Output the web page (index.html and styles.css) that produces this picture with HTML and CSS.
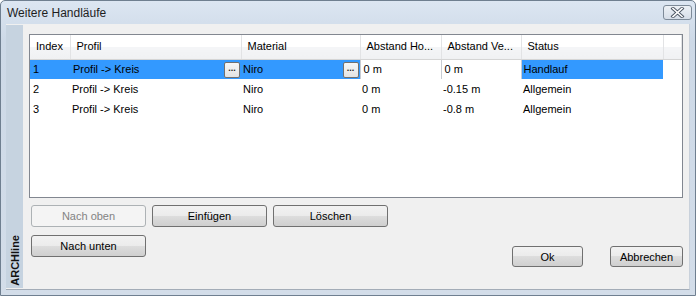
FILE: index.html
```html
<!DOCTYPE html>
<html lang="de">
<head>
    <meta charset="UTF-8">
    <title>Weitere Handläufe</title>
    <link rel="stylesheet" href="styles.css">
</head>
<body>
    <div class="window">
        <div class="titlebar">
            <span class="title">Weitere Handläufe</span>
            <button class="close" title="Schließen">
                <svg width="15" height="11" viewBox="0 0 15 11">
                    <path d="M3 1.5 L12 9.5 M12 1.5 L3 9.5" stroke="#4b5563" stroke-width="3.4" stroke-linecap="square"/>
                    <path d="M3 1.5 L12 9.5 M12 1.5 L3 9.5" stroke="#fff" stroke-width="1.6" stroke-linecap="square"/>
                </svg>
            </button>
        </div>
        <div class="client">
            <div class="brand"><span>ARCHline</span></div>
            <div class="content">
                <div class="grid">
                    <table>
                        <colgroup>
                            <col class="c-index">
                            <col class="c-profil">
                            <col class="c-material">
                            <col class="c-ho">
                            <col class="c-ve">
                            <col class="c-status">
                            <col>
                        </colgroup>
                        <thead>
                            <tr>
                                <th>Index</th>
                                <th>Profil</th>
                                <th>Material</th>
                                <th>Abstand Ho...</th>
                                <th>Abstand Ve...</th>
                                <th>Status</th>
                                <th></th>
                            </tr>
                        </thead>
                        <tbody>
                            <tr class="selected">
                                <td>1</td>
                                <td class="pick"><span class="val">Profil -&gt; Kreis</span><button class="dots">...</button></td>
                                <td class="pick"><span class="val">Niro</span><button class="dots">...</button></td>
                                <td class="edit">0 m</td>
                                <td class="edit">0 m</td>
                                <td>Handlauf</td>
                                <td class="filler"></td>
                            </tr>
                            <tr>
                                <td>2</td>
                                <td>Profil -&gt; Kreis</td>
                                <td>Niro</td>
                                <td>0 m</td>
                                <td>-0.15 m</td>
                                <td>Allgemein</td>
                                <td></td>
                            </tr>
                            <tr>
                                <td>3</td>
                                <td>Profil -&gt; Kreis</td>
                                <td>Niro</td>
                                <td>0 m</td>
                                <td>-0.8 m</td>
                                <td>Allgemein</td>
                                <td></td>
                            </tr>
                        </tbody>
                    </table>
                </div>
                <div class="bottom">
                    <div class="tools">
                        <div class="tool-row">
                            <button class="btn wide" disabled>Nach oben</button>
                            <button class="btn wide">Einfügen</button>
                            <button class="btn wide">Löschen</button>
                        </div>
                        <div class="tool-row">
                            <button class="btn wide">Nach unten</button>
                        </div>
                    </div>
                    <div class="dialog-buttons">
                        <button class="btn ok">Ok</button>
                        <button class="btn cancel">Abbrechen</button>
                    </div>
                </div>
            </div>
        </div>
    </div>
</body>
</html>
```

FILE: styles.css
```css
* {
    box-sizing: border-box;
}
body {
    margin: 0;
    font-family: "Liberation Sans", Arial, sans-serif;
    font-size: 11px;
    color: #000;
    background: #fff;
}
.window {
    width: 696px;
    height: 296px;
    border: 1px solid #6f7f90;
    border-radius: 5px 5px 0 0;
    background: linear-gradient(#dce6f2, #cdd9e7 40px, #d3dde9);
    display: flex;
    flex-direction: column;
    padding: 0 5px 5px 5px;
}
.titlebar {
    height: 23px;
    display: flex;
    align-items: flex-start;
    justify-content: space-between;
}
.title {
    font-size: 12px;
    color: #1e1e1e;
    padding: 5px 0 0 1px;
}
.close {
    width: 29px;
    height: 15px;
    margin: 4px -2px 0 0;
    padding: 0;
    border: 1px solid #7d8a98;
    border-radius: 3px;
    background: linear-gradient(#edf1f6, #d6dee8);
    display: flex;
    align-items: center;
    justify-content: center;
}
.client {
    flex: 1;
    display: flex;
    background-color: #f0f0f0;
    border-right: 1px solid #c9d1db;
    border-bottom: 1px solid #a3acb7;
}
.brand {
    width: 17px;
    margin: 1px 0;
    background-color: #c6d3e0;
    display: flex;
    flex-direction: column;
    justify-content: flex-end;
    align-items: center;
    padding-bottom: 2px;
}
.brand span {
    writing-mode: vertical-rl;
    transform: rotate(180deg);
    font-weight: bold;
    font-size: 11px;
    color: #111;
}
.content {
    flex: 1;
    display: flex;
    flex-direction: column;
    padding: 10px 6px 22px 6px;
}
.grid {
    height: 164px;
    border: 1px solid #828790;
    background: #fff;
    overflow: hidden;
}
table {
    width: 100%;
    border-collapse: collapse;
    table-layout: fixed;
}
.c-index { width: 40px; }
.c-profil { width: 171px; }
.c-material { width: 119px; }
.c-ho { width: 81px; }
.c-ve { width: 80px; }
.c-status { width: 142px; }
th {
    height: 24px;
    font-weight: normal;
    text-align: left;
    padding: 0 0 1px 6px;
    white-space: nowrap;
    overflow: hidden;
    background: linear-gradient(#ffffff, #ffffff 50%, #f4f5f7 50%, #f0f1f3);
    border-right: 1px solid #e2e3e5;
    border-bottom: 1px solid #d5d5d5;
}
td {
    height: 20px;
    padding: 0 0 0 2px;
    white-space: nowrap;
    overflow: hidden;
}
td:first-child {
    padding-left: 3px;
}
.selected td {
    background-color: #3399ff;
}
.selected td.filler {
    background-color: #fff;
}
.selected td.edit {
    background-color: #fff;
    padding-left: 3px;
    border-left: 1px solid #c8ccd2;
    border-right: 1px solid #c8ccd2;
}
.pick {
    position: relative;
}
.pick .val {
    padding-left: 1px;
}
.selected td.pick:nth-child(3) .val {
    padding-left: 0;
}
.dots {
    position: absolute;
    right: 1px;
    top: 2px;
    width: 16px;
    height: 16px;
    padding: 0 0 3px 0;
    border: 1px solid #707070;
    border-radius: 2px;
    background: linear-gradient(#f6f6f6, #e3e3e3);
    font-family: "Liberation Sans", Arial, sans-serif;
    font-size: 9px;
    font-weight: bold;
    line-height: 10px;
    color: #222;
}
.bottom {
    flex: 1;
    display: flex;
    justify-content: space-between;
    padding-left: 2px;
}
.tools {
    display: flex;
    flex-direction: column;
    gap: 8px;
    padding-top: 7px;
}
.tool-row {
    display: flex;
    gap: 6px;
}
.btn {
    height: 22px;
    padding: 0;
    border: 1px solid #707070;
    border-radius: 3px;
    background: linear-gradient(#f2f2f2, #ebebeb 50%, #dddddd 50%, #cfcfcf);
    font-family: "Liberation Sans", Arial, sans-serif;
    font-size: 11px;
    color: #000;
}
.btn:disabled {
    border-color: #adb2b5;
    background: #f4f4f4;
    color: #838383;
}
.wide {
    width: 115px;
}
.dialog-buttons {
    display: flex;
    align-items: flex-end;
    gap: 27px;
}
.ok {
    width: 71px;
    height: 21px;
}
.cancel {
    width: 73px;
    height: 21px;
}
```
